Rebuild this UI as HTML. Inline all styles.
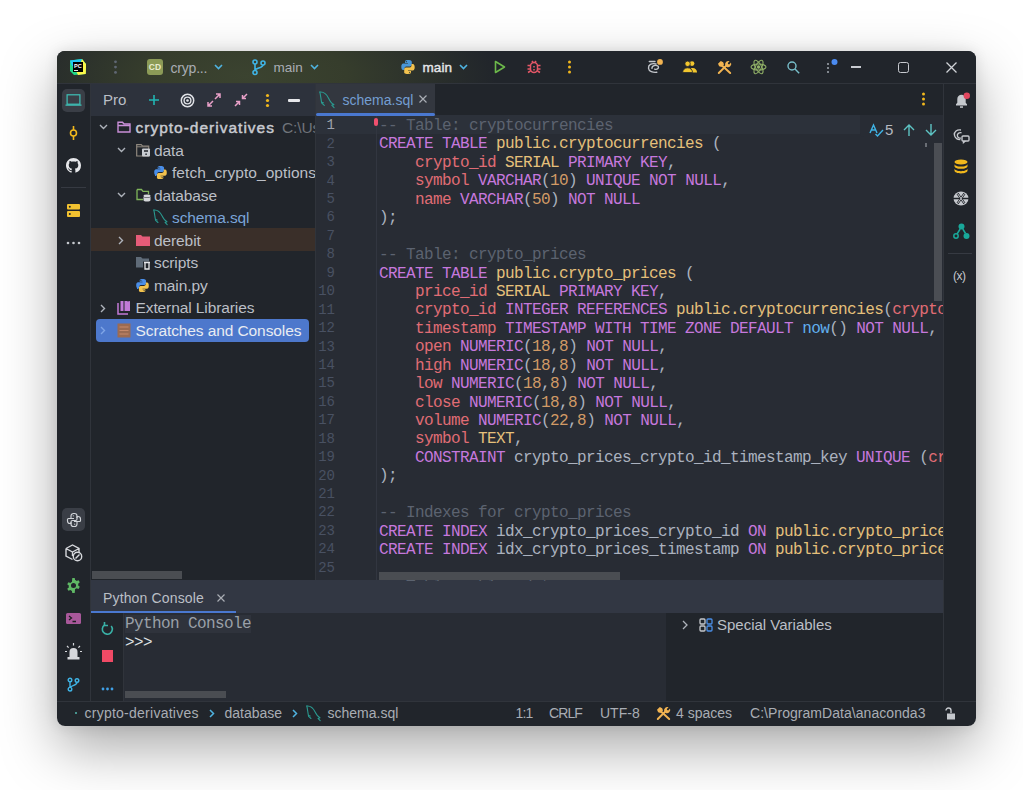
<!DOCTYPE html>
<html><head><meta charset="utf-8">
<style>
*{box-sizing:border-box;margin:0;padding:0}
html,body{width:1023px;height:790px;overflow:hidden;background:#fff}
body{font-family:"Liberation Sans",sans-serif;position:relative;color:#bbbfc6}
.a{position:absolute}
#win{left:57px;top:51px;width:919px;height:675px;border-radius:8px;overflow:hidden;box-shadow:0 22px 56px rgba(0,0,0,.34),0 0 14px rgba(0,0,0,.10)}
#pg{left:-57px;top:-51px;width:1023px;height:790px}
svg{position:absolute;overflow:visible}
.t{position:absolute;white-space:pre;font-size:15px;line-height:22.5px}
.code{position:absolute;left:379px;top:117px;width:564px;height:464px;overflow:hidden;font-family:"Liberation Mono",monospace;font-size:16px;letter-spacing:-0.6px;line-height:18.45px;color:#abb2bf;white-space:pre}
.code div{height:18.45px}
.k{color:#c678dd}.i{color:#e06c75}.y{color:#e5c07b}.n{color:#d19a66}.f{color:#61afef}.c{color:#5c6370}
.ln{position:absolute;left:301px;top:116.3px;width:34px;font-family:"Liberation Mono",monospace;font-size:14px;line-height:18.45px;color:#495162;text-align:right;white-space:pre}
.ln div{height:18.45px}
</style></head><body>
<div id="win" class="a"><div id="pg" class="a">
  <!-- backgrounds -->
  <div class="a" style="left:57px;top:51px;width:919px;height:675px;background:#21252b"></div>
  <div class="a" style="left:57px;top:51px;width:919px;height:32px;background:radial-gradient(ellipse 250px 90px at 190px 25px,#3b4330 0%,#363d2c 40%,rgba(33,37,43,0) 100%),#21252b"></div>
  <div class="a" style="left:57px;top:83px;width:919px;height:1px;background:#30343b"></div>
  <div class="a" style="left:90px;top:84px;width:1px;height:617px;background:#30343b"></div>
  <div class="a" style="left:943px;top:84px;width:1px;height:617px;background:#30343b"></div>
  <div class="a" style="left:57px;top:701px;width:919px;height:1px;background:#30343b"></div>
  <!-- project header -->
  <div class="a" style="left:91px;top:84px;width:224px;height:32px;background:#2d323c"></div>
  <div class="a" style="left:315px;top:84px;width:1px;height:496px;background:#30343b"></div>
  <!-- editor -->
  <div class="a" style="left:316px;top:84px;width:627px;height:31px;background:#21252b"></div>
  <div class="a" style="left:316px;top:115px;width:627px;height:465px;background:#282c34"></div>
  <div class="a" style="left:316px;top:115px;width:544px;height:19px;background:#2c313a"></div>
  <div class="a" style="left:376px;top:115px;width:1px;height:465px;background:#323640"></div>
  <!-- console -->
  <div class="a" style="left:91px;top:580px;width:852px;height:33px;background:#323743"></div>
  <div class="a" style="left:91px;top:613px;width:852px;height:88px;background:#282c34"></div>
  <div class="a" style="left:91px;top:613px;width:33px;height:88px;background:#21252b"></div>
  <div class="a" style="left:666px;top:613px;width:277px;height:88px;background:#21252b"></div>
  <!-- title bar -->
  <svg style="left:70px;top:59px" width="16" height="16" viewBox="0 0 16 16"><path d="M0 1.5L12 0 16 5 15.5 15 4 16 0 12z" fill="#21d789"/><path d="M0 1.5L12 0 10 6 2 7z" fill="#21c8f6"/><path d="M12 0L16 5 15.5 15 8 12z" fill="#fcf84a"/><path d="M16 5l-.5 10L8 16 6 12z" fill="#fcf84a"/><rect x="3" y="3" width="10" height="10" fill="#000"/><text x="4" y="8.6" font-family="Liberation Sans" font-weight="bold" font-size="5.6" fill="#fff">PC</text><rect x="4" y="11" width="4" height="0.9" fill="#fff"/></svg>
  <svg style="left:113px;top:60px" width="5" height="14" viewBox="0 0 5 14"><circle cx="2.5" cy="1.8" r="1.4" fill="#5f6773"/><circle cx="2.5" cy="7.1" r="1.4" fill="#5f6773"/><circle cx="2.5" cy="12.4" r="1.4" fill="#5f6773"/></svg>
  <div class="a" style="left:147px;top:59px;width:16px;height:16px;border-radius:3px;background:#8c9b57;color:#e8eccf;font:bold 8.5px 'Liberation Sans';line-height:16px;text-align:center">CD</div>
  <div class="t" style="left:170.5px;top:57px;font-size:14px;line-height:22px;color:#a9adb4;letter-spacing:-0.2px">cryp...</div>
  <svg style="left:214px;top:64px" width="9" height="6" viewBox="0 0 9 6" fill="none" stroke="#4fb3e0" stroke-width="1.6"><path d="M1 1l3.5 3.5L8 1"/></svg>
  <svg style="left:252px;top:59px" width="14" height="16" viewBox="0 0 14 16" fill="none" stroke="#3fb4e6" stroke-width="1.6"><circle cx="3" cy="3" r="2"/><circle cx="11" cy="4" r="2"/><circle cx="3" cy="13.5" r="2"/><path d="M3 5v6.5M11 6c0 3-8 3-8 5.5"/></svg>
  <div class="t" style="left:273.5px;top:57px;font-size:13.5px;line-height:22px;color:#a9adb4">main</div>
  <svg style="left:310px;top:64px" width="9" height="6" viewBox="0 0 9 6" fill="none" stroke="#4fb3e0" stroke-width="1.6"><path d="M1 1l3.5 3.5L8 1"/></svg>
  <svg style="left:400px;top:59px" width="16" height="16" viewBox="0 0 16 16"><path d="M7.9 1C4.8 1 5 2.4 5 2.4V4h3v.6H3.6S1.3 4.3 1.3 7.8s2 3.3 2 3.3h1.2V9.5s0-2 2-2h3.4s1.9 0 1.9-1.9V2.9S12 1 7.9 1zM6.3 2.1a.6.6 0 110 1.2.6.6 0 010-1.2z" fill="#4a97d8"/><path d="M8.1 15c3.1 0 2.9-1.4 2.9-1.4V12H8v-.6h4.4s2.3.3 2.3-3.2-2-3.3-2-3.3h-1.2v1.6s0 2-2 2H6.1s-1.9 0-1.9 1.9v3.1S4 15 8.1 15zm1.6-1.1a.6.6 0 110-1.2.6.6 0 010 1.2z" fill="#f2c24e"/></svg>
  <div class="t" style="left:422.5px;top:57px;font-size:13.5px;line-height:22px;color:#e4e6ea;-webkit-text-stroke:0.4px #e4e6ea;letter-spacing:0.1px">main</div>
  <svg style="left:459px;top:64px" width="9" height="6" viewBox="0 0 9 6" fill="none" stroke="#4fb3e0" stroke-width="1.6"><path d="M1 1l3.5 3.5L8 1"/></svg>
  <svg style="left:494px;top:60px" width="12" height="14" viewBox="0 0 12 14" fill="none" stroke="#6cb84a" stroke-width="1.6" stroke-linejoin="round"><path d="M1.5 1.5v11l9-5.5z"/></svg>
  <svg style="left:526px;top:59px" width="16" height="16" viewBox="0 0 16 16" fill="none" stroke="#e55767" stroke-width="1.5"><rect x="4.5" y="3.5" width="7" height="10" rx="3.5"/><path d="M8 7v1.5M8 10v1.5M6 2l1 1.5M10 2L9 3.5M1.5 6.5h3M11.5 6.5h3M1.5 10h3M11.5 10h3M2 13.5l2.5-1.5M14 13.5L11.5 12"/></svg>
  <svg style="left:567px;top:60px" width="5" height="14" viewBox="0 0 5 14"><circle cx="2.5" cy="2" r="1.5" fill="#f2b81c"/><circle cx="2.5" cy="7" r="1.5" fill="#f2b81c"/><circle cx="2.5" cy="12" r="1.5" fill="#f2b81c"/></svg>
  <svg style="left:647px;top:58px" width="17" height="16" viewBox="0 0 17 16" fill="none" stroke="#c2c5ca" stroke-width="1.4" stroke-linecap="round"><path d="M2.3 3.5H8"/><path d="M9 6C4.5 4.8 1.2 7 1.5 10.2S6 14.8 9.8 14.3"/><path d="M5 10.3c-.3-2.5 4-3.8 5.8-2.2s-.5 4-3.2 3"/><circle cx="13" cy="3.9" r="2.9" fill="#f2b452" stroke="none"/></svg>
  <svg style="left:682px;top:60px" width="16" height="13" viewBox="0 0 16 13" fill="#f2c62e"><circle cx="10" cy="3.6" r="2.4"/><path d="M9 8.2c.6-.2 1.2-.2 1.8-.2 2.4 0 4 1.6 4.3 4.6H10z"/><circle cx="5.6" cy="3.8" r="2.7" stroke="#21252b" stroke-width="0.8"/><path d="M.6 12.6C.8 9.6 2.8 7.8 5.6 7.8s4.8 1.8 5 4.8z" stroke="#21252b" stroke-width="0.8"/></svg>
  <svg style="left:717px;top:60px" width="15" height="14" viewBox="0 0 15 14"><path d="M5 5.5L13.2 13" stroke="#f2b452" stroke-width="2" stroke-linecap="round"/><path d="M1 3.8L3.8 1l2.4 1.2.8 2.2-2.6 2.6-2.2-.8z" fill="#f2b452"/><path d="M1.8 13L9.2 5.6" stroke="#f2b452" stroke-width="2" stroke-linecap="round"/><path d="M8.3 5.5a3.3 3.3 0 014.3-4.3L10.8 3l.3 1.1 1.1.3 1.8-1.8a3.3 3.3 0 01-4.3 4.3z" fill="#f2b452"/></svg>
  <svg style="left:750px;top:59px" width="17" height="16" viewBox="0 0 17 16" fill="none" stroke="#8fae66" stroke-width="1.1"><ellipse cx="8.5" cy="8" rx="7.5" ry="3" transform="rotate(60 8.5 8)"/><ellipse cx="8.5" cy="8" rx="7.5" ry="3" transform="rotate(-60 8.5 8)"/><ellipse cx="8.5" cy="8" rx="7.5" ry="3"/><circle cx="8.5" cy="8" r="1.2" fill="#93b56c"/></svg>
  <svg style="left:787px;top:61px" width="13" height="13" viewBox="0 0 13 13" fill="none" stroke="#78bfcb" stroke-width="1.4"><circle cx="5" cy="5" r="4"/><path d="M8 8l4.2 4.2"/></svg>
  <svg style="left:825px;top:59px" width="13" height="15" viewBox="0 0 13 15"><circle cx="3" cy="5" r="1.1" fill="#9aa0a8"/><circle cx="3" cy="9" r="1.1" fill="#9aa0a8"/><circle cx="3" cy="13" r="1.1" fill="#9aa0a8"/><circle cx="9.5" cy="3" r="3" fill="#4b8bf0"/></svg>
  <div class="a" style="left:851px;top:65.5px;width:10px;height:2px;background:#c8cbd0"></div>
  <div class="a" style="left:898px;top:62px;width:11px;height:11px;border:1.4px solid #c8cbd0;border-radius:2.5px"></div>
  <svg style="left:946px;top:62px" width="11" height="11" viewBox="0 0 11 11" fill="none" stroke="#d0d3d8" stroke-width="1.3"><path d="M.5 .5l10 10M10.5 .5l-10 10"/></svg>
  <!-- left stripe -->
  <div class="a" style="left:62px;top:89px;width:23px;height:23px;border-radius:5px;background:#3a3e46"></div>
  <svg style="left:65px;top:94px" width="17" height="12" viewBox="0 0 17 12" fill="none" stroke="#3fc1b7" stroke-width="1.2"><rect x="2.1" y="0.8" width="12.8" height="9.4"/><path d="M0.5 11.2h16"/></svg>
  <svg style="left:69px;top:126px" width="9" height="14" viewBox="0 0 9 14" fill="none" stroke="#f2b81c" stroke-width="1.6"><circle cx="4.5" cy="7" r="3"/><path d="M4.5 0v4M4.5 10v4"/></svg>
  <svg style="left:66px;top:158px" width="15" height="15" viewBox="0 0 16 16"><path fill="#e6e7ea" d="M8 0C3.58 0 0 3.58 0 8c0 3.54 2.29 6.53 5.47 7.59.4.07.55-.17.55-.38 0-.19-.01-.82-.01-1.49-2.01.37-2.53-.49-2.69-.94-.09-.23-.48-.94-.82-1.13-.28-.15-.68-.52-.01-.53.63-.01 1.08.58 1.23.82.72 1.21 1.87.87 2.33.66.07-.52.28-.87.51-1.07-1.78-.2-3.64-.89-3.64-3.95 0-.87.31-1.59.82-2.15-.08-.2-.36-1.02.08-2.12 0 0 .67-.21 2.2.82.64-.18 1.32-.27 2-.27.68 0 1.36.09 2 .27 1.53-1.04 2.2-.82 2.2-.82.44 1.1.16 1.92.08 2.12.51.56.82 1.27.82 2.15 0 3.07-1.87 3.75-3.65 3.95.29.25.54.73.54 1.48 0 1.07-.01 1.93-.01 2.2 0 .21.15.46.55.38A8.013 8.013 0 0016 8c0-4.42-3.58-8-8-8z"/></svg>
  <div class="a" style="left:61px;top:187px;width:25px;height:1px;background:#363a42"></div>
  <svg style="left:67px;top:204px" width="13" height="13" viewBox="0 0 13 13"><rect x="0" y="0" width="13" height="5.6" rx="1" fill="#f2c230"/><rect x="0" y="7" width="13" height="6" rx="1" fill="#f2c230"/><circle cx="2.8" cy="2.8" r="1" fill="#21252b"/><circle cx="2.8" cy="10" r="1" fill="#21252b"/></svg>
  <svg style="left:66px;top:241px" width="15" height="4" viewBox="0 0 15 4"><circle cx="2" cy="2" r="1.3" fill="#c5c8cd"/><circle cx="7.5" cy="2" r="1.3" fill="#c5c8cd"/><circle cx="13" cy="2" r="1.3" fill="#c5c8cd"/></svg>
  <div class="a" style="left:62px;top:508px;width:23px;height:23px;border-radius:5px;background:#3a3e46"></div>
  <svg style="left:65.5px;top:512px" width="16" height="16" viewBox="0 0 16 16" fill="none" stroke="#d0d3d8" stroke-width="1.15" stroke-linejoin="round"><path d="M5 6.5V4a2.5 2.5 0 012.5-2.5h1A2.5 2.5 0 0111 4v3a1.5 1.5 0 01-1.5 1.5h-3A1.5 1.5 0 005 10v1.5H4A2.5 2.5 0 011.5 9V7.5a1 1 0 011-1H8"/><path d="M11 9.5V12a2.5 2.5 0 01-2.5 2.5h-1A2.5 2.5 0 015 12V10M11 6V4.5h1A2.5 2.5 0 0114.5 7v1.5a1 1 0 01-1 1H8"/><circle cx="7.3" cy="3.8" r=".6" fill="#d0d3d8" stroke="none"/><circle cx="8.7" cy="12.2" r=".6" fill="#d0d3d8" stroke="none"/></svg>
  <svg style="left:65px;top:544px" width="18" height="18" viewBox="0 0 18 18" fill="none" stroke="#d6d8dc" stroke-width="1.4"><path d="M1 4.5L7.5 1 14 4.5v4M1 4.5v7.5L7.5 15.5M1 4.5L7.5 8l6.5-3.5M7.5 8v4"/><circle cx="12.5" cy="12.5" r="4.2"/><path d="M10.5 14.5l4-4"/></svg>
  <svg style="left:66px;top:578px" width="15" height="15" viewBox="0 0 16 16"><path fill="#5fb865" d="M9.3 0l.4 2.2c.6.2 1.1.5 1.6.9l2.1-.8 1.3 2.3-1.7 1.4c.1.6.1 1.2 0 1.9l1.7 1.4-1.3 2.3-2.1-.8c-.5.4-1 .7-1.6.9L9.3 16H6.7l-.4-2.2c-.6-.2-1.1-.5-1.6-.9l-2.1.8-1.3-2.3 1.7-1.4c-.1-.6-.1-1.2 0-1.9L1.3 6.7l1.3-2.3 2.1.8c.5-.4 1-.7 1.6-.9L6.7 0zM8 5.3a2.7 2.7 0 100 5.4 2.7 2.7 0 000-5.4z"/></svg>
  <div class="a" style="left:66px;top:612.5px;width:15px;height:11.5px;border-radius:1.5px;background:#a8589a"></div>
  <svg style="left:68px;top:614.5px" width="10" height="8" viewBox="0 0 10 8" fill="none" stroke="#1e1f22" stroke-width="1.3"><path d="M1 1l2.5 2L1 5M4.5 6.5H8"/></svg>
  <svg style="left:65px;top:643px" width="17" height="17" viewBox="0 0 17 17"><path d="M4.5 14V9a4 4 0 018 0v5z" fill="#d6d8dc"/><rect x="2.5" y="14" width="12" height="2.5" fill="#d6d8dc"/><path d="M8.5 0v2.5M2 3l1.6 1.6M15 3l-1.6 1.6M0 8.5h2M15 8.5h2" stroke="#d6d8dc" stroke-width="1.2"/></svg>
  <svg style="left:67px;top:677px" width="12" height="15" viewBox="0 0 12 15" fill="none" stroke="#3fb4e6" stroke-width="1.4"><circle cx="3" cy="3" r="1.8"/><circle cx="3" cy="12.2" r="1.8"/><circle cx="10" cy="3.5" r="1.8"/><path d="M3 4.8v5.6M10 5.3c0 3.5-6.5 3-6.8 5.3"/></svg>
  <div class="a" style="left:0;top:0;width:315px;height:580px;overflow:hidden">
  <!-- project header -->
  <div class="t" style="left:103px;top:89px;font-size:15px;line-height:22px;color:#bbbfc6">Pro<span style="font-size:5px;color:#6a8fc8">,</span></div>
  <svg style="left:148px;top:94px" width="12" height="12" viewBox="0 0 12 12"><path d="M6 1v10M1 6h10" stroke="#21b5b3" stroke-width="1.6"/></svg>
    <svg style="left:180px;top:93px" width="15" height="15" viewBox="0 0 15 15"><circle cx="7.5" cy="7.5" r="6.2" fill="none" stroke="#dfe1e5" stroke-width="1.5"/><circle cx="7.5" cy="7.5" r="3.4" fill="none" stroke="#dfe1e5" stroke-width="1.4"/><circle cx="7.5" cy="7.5" r="1.3" fill="#dfe1e5"/></svg>
  <svg style="left:207px;top:93px" width="14" height="14" viewBox="0 0 14 14" fill="none" stroke="#e8a0c8" stroke-width="1.5"><path d="M8 6l5-5M9 1h4v4M6 8l-5 5M1 9v4h4"/></svg>
  <svg style="left:234px;top:93px" width="14" height="14" viewBox="0 0 14 14" fill="none" stroke="#e8a0c8" stroke-width="1.5"><path d="M13 1L8.5 5.5M8.5 2v3.5H12M1 13l4.5-4.5M2 8.5h3.5V12"/></svg>
  <svg style="left:265px;top:93px" width="5" height="15" viewBox="0 0 5 15"><circle cx="2.5" cy="2.5" r="1.6" fill="#f2b81c"/><circle cx="2.5" cy="7.5" r="1.6" fill="#f2b81c"/><circle cx="2.5" cy="12.5" r="1.6" fill="#f2b81c"/></svg>
  <div class="a" style="left:288px;top:99px;width:12px;height:3px;background:#e6e7ea;border-radius:1px"></div>
  <!-- tree rows -->
  <div class="a" style="left:91px;top:228px;width:224px;height:23px;background:#3a2f29"></div>
  <div class="a" style="left:96px;top:319px;width:213px;height:23px;background:#4d78cc;border-radius:4px"></div>
  <svg style="left:99px;top:124px" width="9" height="6" viewBox="0 0 9 6" fill="none" stroke="#aeb3bb" stroke-width="1.4"><path d="M1 1l3.5 3.5L8 1"/></svg>
  <svg style="left:117px;top:121px" width="14" height="12" viewBox="0 0 14 12" fill="none" stroke="#c98fd8" stroke-width="1.4"><path d="M1 1.2h4.5l1.5 1.8h6v8H1z"/><path d="M1 4.5h12"/></svg>
  <div class="t" style="left:135.5px;top:117.2px;font-size:15.5px;letter-spacing:1.0px;-webkit-text-stroke:0.45px #c8cbd1;color:#c8cbd1">crypto-derivatives</div>
  <div class="t" style="left:282px;top:117.3px;color:#6f737a;font-size:15.5px;letter-spacing:-0.1px">C:\Users</div>
  <div class="a" style="left:91px;top:116px;width:0;height:0"></div>
  <svg style="left:117px;top:147px" width="9" height="6" viewBox="0 0 9 6" fill="none" stroke="#aeb3bb" stroke-width="1.4"><path d="M1 1l3.5 3.5L8 1"/></svg>
  <svg style="left:135.5px;top:144px" width="15" height="13" viewBox="0 0 15 13"><path d="M.7 .7h4.5l1.2 1.3h6.3v10H.7z" fill="none" stroke="#8f887e" stroke-width="1.2"/><path d="M.7 2.8h12" stroke="#8f887e" stroke-width="1"/><rect x="6" y="4.5" width="8" height="8" rx="1" fill="#c9ccd1"/><rect x="8" y="6" width="4" height="2" fill="#4a4d52"/><rect x="9.3" y="9.5" width="1.6" height="1.4" fill="#21252b"/></svg>
  <div class="t" style="left:154px;top:139.8px;color:#bbbfc6;font-size:15.5px;letter-spacing:-0.1px">data</div>
  <svg style="left:153px;top:165px" width="15" height="15" viewBox="0 0 16 16"><path d="M7.9 1C4.8 1 5 2.4 5 2.4V4h3v.6H3.6S1.3 4.3 1.3 7.8s2 3.3 2 3.3h1.2V9.5s0-2 2-2h3.4s1.9 0 1.9-1.9V2.9S12 1 7.9 1zM6.3 2.1a.6.6 0 110 1.2.6.6 0 010-1.2z" fill="#4a8ee8"/><path d="M8.1 15c3.1 0 2.9-1.4 2.9-1.4V12H8v-.6h4.4s2.3.3 2.3-3.2-2-3.3-2-3.3h-1.2v1.6s0 2-2 2H6.1s-1.9 0-1.9 1.9v3.1S4 15 8.1 15zm1.6-1.1a.6.6 0 110-1.2.6.6 0 010 1.2z" fill="#f2c24e"/></svg>
  <div class="t" style="left:172px;top:162.3px;color:#bbbfc6;font-size:15.5px;letter-spacing:0.05px">fetch_crypto_options.py</div>
  <svg style="left:117px;top:192px" width="9" height="6" viewBox="0 0 9 6" fill="none" stroke="#aeb3bb" stroke-width="1.4"><path d="M1 1l3.5 3.5L8 1"/></svg>
  <svg style="left:136px;top:188px" width="15" height="14" viewBox="0 0 15 14"><path d="M1 1.5h4.5l1.5 1.8h5.5v3M1 1.5v10h6" fill="none" stroke="#7fb55a" stroke-width="1.3"/><ellipse cx="11" cy="8" rx="3.5" ry="1.4" fill="#d5d7da"/><path d="M7.5 8.6v3.6c0 .8 1.6 1.4 3.5 1.4s3.5-.6 3.5-1.4V8.6c0 .8-1.6 1.4-3.5 1.4s-3.5-.6-3.5-1.4z" fill="#d5d7da"/></svg>
  <div class="t" style="left:154px;top:184.8px;color:#bbbfc6;font-size:15.5px;letter-spacing:-0.1px">database</div>
  <svg style="left:153px;top:209px" width="16" height="16" viewBox="0 0 16 16" fill="none" stroke="#2a9a90" stroke-width="1.05" stroke-linejoin="round" stroke-linecap="round"><path d="M0.8 1C4.5.6 7.2 3 9 6.8s2.8 5 5 6l-2 .6 2.2 2.3"/><path d="M0.8 1C1.6 4 1.8 8 2.6 11.3l2.4 2.2"/><path d="M2.6 10.5l1.5.6"/></svg>
  <div class="t" style="left:172px;top:207.3px;color:#7aa4d8;font-size:15.5px;letter-spacing:-0.1px">schema.sql</div>
  <svg style="left:118px;top:236px" width="6" height="9" viewBox="0 0 6 9" fill="none" stroke="#aeb3bb" stroke-width="1.4"><path d="M1 1l3.5 3.5L1 8"/></svg>
  <svg style="left:136px;top:234px" width="14" height="12" viewBox="0 0 14 12"><path d="M0 1h5l1.5 1.5H14V12H0z" fill="#e65c78"/></svg>
  <div class="t" style="left:154px;top:229.8px;color:#bbbfc6;font-size:15.5px;letter-spacing:-0.1px">derebit</div>
  <svg style="left:136px;top:256px" width="15" height="14" viewBox="0 0 15 14"><path d="M0 1h5l1.5 1.5H13v3H7v6H0z" fill="#5f6b78"/><path d="M8 6.5h6M9 6.5v6.5h4V7" fill="none" stroke="#e6e7ea" stroke-width="1.3"/></svg>
  <div class="t" style="left:154px;top:252.3px;color:#bbbfc6;font-size:15.5px;letter-spacing:-0.1px">scripts</div>
  <svg style="left:135px;top:278px" width="15" height="15" viewBox="0 0 16 16"><path d="M7.9 1C4.8 1 5 2.4 5 2.4V4h3v.6H3.6S1.3 4.3 1.3 7.8s2 3.3 2 3.3h1.2V9.5s0-2 2-2h3.4s1.9 0 1.9-1.9V2.9S12 1 7.9 1zM6.3 2.1a.6.6 0 110 1.2.6.6 0 010-1.2z" fill="#4a8ee8"/><path d="M8.1 15c3.1 0 2.9-1.4 2.9-1.4V12H8v-.6h4.4s2.3.3 2.3-3.2-2-3.3-2-3.3h-1.2v1.6s0 2-2 2H6.1s-1.9 0-1.9 1.9v3.1S4 15 8.1 15zm1.6-1.1a.6.6 0 110-1.2.6.6 0 010 1.2z" fill="#f2c24e"/></svg>
  <div class="t" style="left:154px;top:274.8px;color:#bbbfc6;font-size:15.5px;letter-spacing:-0.1px">main.py</div>
  <svg style="left:100px;top:304px" width="6" height="9" viewBox="0 0 6 9" fill="none" stroke="#aeb3bb" stroke-width="1.4"><path d="M1 1l3.5 3.5L1 8"/></svg>
  <svg style="left:117px;top:300px" width="14" height="15" viewBox="0 0 14 15"><path d="M1 3v11h10" fill="none" stroke="#c27ad8" stroke-width="1.5"/><path d="M3.5 1h3v10h-3zM7.5 1h2.5l.8.5L13 1v10H7.5z" fill="#c27ad8"/></svg>
  <div class="t" style="left:135.5px;top:297.3px;color:#bbbfc6;font-size:15.5px;letter-spacing:-0.1px">External Libraries</div>
  <svg style="left:100px;top:326px" width="6" height="9" viewBox="0 0 6 9" fill="none" stroke="#7fa5e6" stroke-width="1.4"><path d="M1 1l3.5 3.5L1 8"/></svg>
  <svg style="left:117px;top:323px" width="14" height="15" viewBox="0 0 14 15"><rect x="0.5" y="0.5" width="13" height="14" fill="#9c6b52"/><path d="M2.5 4h9M2.5 7.5h9M2.5 11h9" stroke="#c88a6a" stroke-width="1.2"/></svg>
  <div class="t" style="left:135.5px;top:319.8px;color:#e8ecf2;font-size:15.5px;letter-spacing:-0.1px">Scratches and Consoles</div>
  </div>
  <!-- code -->
  <div class="ln"><div style="color:#9ea4ad">1</div><div>2</div><div>3</div><div>4</div><div>5</div><div>6</div><div>7</div><div>8</div><div>9</div><div>10</div><div>11</div><div>12</div><div>13</div><div>14</div><div>15</div><div>16</div><div>17</div><div>18</div><div>19</div><div>20</div><div>21</div><div>22</div><div>23</div><div>24</div><div>25</div></div>
  <div class="a" style="left:373.5px;top:117.5px;width:4px;height:8px;border-radius:2px;background:#f0506e"></div>
  <div class="code"><div class="c">-- Table: cryptocurrencies</div><div><span class="k">CREATE TABLE</span> <span class="y">public.cryptocurrencies</span> (</div><div>    <span class="i">crypto_id</span> <span class="y">SERIAL</span> <span class="k">PRIMARY KEY</span>,</div><div>    <span class="i">symbol</span> <span class="k">VARCHAR</span>(<span class="n">10</span>) <span class="k">UNIQUE NOT NULL</span>,</div><div>    <span class="i">name</span> <span class="k">VARCHAR</span>(<span class="n">50</span>) <span class="k">NOT NULL</span></div><div>);</div><div> </div><div class="c">-- Table: crypto_prices</div><div><span class="k">CREATE TABLE</span> <span class="y">public.crypto_prices</span> (</div><div>    <span class="i">price_id</span> <span class="y">SERIAL</span> <span class="k">PRIMARY KEY</span>,</div><div>    <span class="i">crypto_id</span> <span class="k">INTEGER REFERENCES</span> <span class="y">public.cryptocurrencies</span>(<span class="i">crypto_id</span>),</div><div>    <span class="i">timestamp</span> <span class="k">TIMESTAMP WITH TIME ZONE DEFAULT</span> <span class="f">now</span>() <span class="k">NOT NULL</span>,</div><div>    <span class="i">open</span> <span class="k">NUMERIC</span>(<span class="n">18</span>,<span class="n">8</span>) <span class="k">NOT NULL</span>,</div><div>    <span class="i">high</span> <span class="k">NUMERIC</span>(<span class="n">18</span>,<span class="n">8</span>) <span class="k">NOT NULL</span>,</div><div>    <span class="i">low</span> <span class="k">NUMERIC</span>(<span class="n">18</span>,<span class="n">8</span>) <span class="k">NOT NULL</span>,</div><div>    <span class="i">close</span> <span class="k">NUMERIC</span>(<span class="n">18</span>,<span class="n">8</span>) <span class="k">NOT NULL</span>,</div><div>    <span class="i">volume</span> <span class="k">NUMERIC</span>(<span class="n">22</span>,<span class="n">8</span>) <span class="k">NOT NULL</span>,</div><div>    <span class="i">symbol</span> <span class="y">TEXT</span>,</div><div>    <span class="k">CONSTRAINT</span> crypto_prices_crypto_id_timestamp_key <span class="k">UNIQUE</span> (<span class="i">crypto_id</span>, <span class="i">timestamp</span>)</div><div>);</div><div> </div><div class="c">-- Indexes for crypto_prices</div><div><span class="k">CREATE INDEX</span> idx_crypto_prices_crypto_id <span class="k">ON</span> <span class="y">public.crypto_prices</span>(<span class="i">crypto_id</span>);</div><div><span class="k">CREATE INDEX</span> idx_crypto_prices_timestamp <span class="k">ON</span> <span class="y">public.crypto_prices</span>(<span class="i">timestamp</span>);</div><div> </div><div class="c">-- Table: ohlcv_data</div>
</div>
  <!-- editor tab -->
  <div class="a" style="left:316px;top:84px;width:119px;height:31px;background:#33373f"></div>
  <div class="a" style="left:316px;top:113px;width:119px;height:3px;border-radius:2px;background:#4a78d0"></div>
  <svg style="left:319px;top:91px" width="17" height="17" viewBox="0 0 16 16" fill="none" stroke="#2a9a90" stroke-width="1.05" stroke-linejoin="round" stroke-linecap="round"><path d="M0.8 1C4.5.6 7.2 3 9 6.8s2.8 5 5 6l-2 .6 2.2 2.3"/><path d="M0.8 1C1.6 4 1.8 8 2.6 11.3l2.4 2.2"/><path d="M2.6 10.5l1.5.6"/></svg>
  <div class="t" style="left:342.5px;top:89px;font-size:14px;line-height:22px;color:#739ed2">schema.sql</div>
  <svg style="left:419px;top:95px" width="8" height="8" viewBox="0 0 8 8" fill="none" stroke="#a9adb4" stroke-width="1.2"><path d="M.5 .5l7 7M7.5 .5l-7 7"/></svg>
  <svg style="left:921px;top:92px" width="5" height="14" viewBox="0 0 5 14"><circle cx="2.5" cy="2" r="1.5" fill="#f2b81c"/><circle cx="2.5" cy="7" r="1.5" fill="#f2b81c"/><circle cx="2.5" cy="12" r="1.5" fill="#f2b81c"/></svg>
  <!-- inspection widget -->
  <div class="a" style="left:860px;top:115px;width:80px;height:22px;border-radius:0 0 0 4px;background:#282c34"></div>
  <svg style="left:869px;top:123.5px" width="15" height="13" viewBox="0 0 15 13" fill="none" stroke="#3fb4e6" stroke-width="1.4"><path d="M1 9L4.5 1 8 9M2.3 6h4.4M6.5 10l2 2L14 6"/></svg>
  <div class="t" style="left:885px;top:119.5px;font-size:15px;line-height:20px;color:#b5b9c0">5</div>
  <svg style="left:903px;top:124px" width="12" height="12" viewBox="0 0 12 12" fill="none" stroke="#5ec4c4" stroke-width="1.4"><path d="M6 12V1M1 6l5-5 5 5"/></svg>
  <svg style="left:925px;top:124px" width="12" height="12" viewBox="0 0 12 12" fill="none" stroke="#5ec4c4" stroke-width="1.4"><path d="M6 0v11M1 6l5 5 5-5"/></svg>
  <!-- scrollbars -->
  <div class="a" style="left:934px;top:143px;width:8px;height:158px;background:#4b4e54"></div>
  <div class="a" style="left:925px;top:143px;width:2px;height:4px;background:#6a6e75"></div>
  <div class="a" style="left:379px;top:572px;width:241px;height:8px;background:#4a4d52"></div>
  <div class="a" style="left:92px;top:571px;width:90px;height:8px;background:#4a4d52"></div>
  <!-- right stripe -->
  <svg style="left:954px;top:92px" width="17" height="17" viewBox="0 0 17 17"><path d="M2 13.5h11v-1.2l-1.3-1.5V7A4.2 4.2 0 007.5 2.8 4.2 4.2 0 003.3 7v3.8L2 12.3z" fill="#c5c8cd"/><rect x="6" y="14.3" width="3" height="1.5" fill="#c5c8cd"/><circle cx="12.8" cy="3.8" r="3.2" fill="#e2475f"/></svg>
  <svg style="left:953px;top:128px" width="17" height="15" viewBox="0 0 17 15" fill="none" stroke="#c5c8cd" stroke-width="1.4"><path d="M8 2C4 1.2 1 3.8 1.4 7s3.5 5 6 4.6"/><path d="M8.5 4.8C6 4.2 4 5.8 4.4 7.8s2.2 2.5 3.5 2.2"/><rect x="9" y="8" width="7" height="5" rx="1"/><path d="M10.5 13v1.5l2-1.5"/></svg>
  <svg style="left:954px;top:159px" width="14" height="15" viewBox="0 0 14 15" fill="#f2b81c"><ellipse cx="7" cy="3" rx="6.5" ry="2.6"/><path d="M.5 5v2.2C.5 8.6 3.4 9.8 7 9.8s6.5-1.2 6.5-2.6V5C13.5 6.4 10.6 7.6 7 7.6S.5 6.4.5 5zM.5 9.6v2.2c0 1.4 2.9 2.6 6.5 2.6s6.5-1.2 6.5-2.6V9.6c0 1.4-2.9 2.6-6.5 2.6S.5 11 .5 9.6z"/></svg>
  <svg style="left:953px;top:191px" width="16" height="15" viewBox="0 0 16 15"><ellipse cx="8" cy="7.5" rx="7.5" ry="7" fill="#c5c8cd"/><path d="M0 7.5h16" stroke="#21252b" stroke-width="1.4"/><path d="M4.5 2.5l7 10M11.5 2.5l-7 10" stroke="#21252b" stroke-width="2.2"/><path d="M4.5 2.5l7 10M11.5 2.5l-7 10" stroke="#c5c8cd" stroke-width="1"/></svg>
  <svg style="left:953px;top:223px" width="17" height="17" viewBox="0 0 17 17"><circle cx="8.5" cy="3.5" r="3" fill="#19a89a"/><circle cx="13.5" cy="13" r="3" fill="#19a89a"/><circle cx="3" cy="13" r="2.2" fill="none" stroke="#19a89a" stroke-width="1.5"/><path d="M7.2 6L4 11M9.8 6l2.8 4.5" stroke="#19a89a" stroke-width="1.5"/></svg>
  <div class="a" style="left:948px;top:253px;width:24px;height:1px;background:#363a42"></div>
  <div class="t" style="left:953px;top:266px;font-size:12px;line-height:20px;color:#c5c8cd;letter-spacing:-0.5px">(x)</div>
  <!-- console -->
  <div class="t" style="left:103px;top:587px;font-size:14px;line-height:22px;color:#bbbfc6;letter-spacing:0.15px">Python Console</div>
  <svg style="left:217px;top:594px" width="8" height="8" viewBox="0 0 8 8" fill="none" stroke="#a9adb4" stroke-width="1.2"><path d="M.5 .5l7 7M7.5 .5l-7 7"/></svg>
  <div class="a" style="left:91px;top:611px;width:145px;height:2px;background:#4a78d0"></div>
  <div class="a" style="left:123px;top:613px;width:1px;height:88px;background:#30343b"></div>
  <svg style="left:101px;top:621px" width="13" height="14" viewBox="0 0 13 14" fill="none" stroke="#39b0a6" stroke-width="1.6"><path d="M3.3 4.2A5 5 0 1010.2 5"/><path d="M3.5 1v3.5H7" /></svg>
  <div class="a" style="left:101.5px;top:650px;width:11.5px;height:11.5px;background:#f04a65"></div>
  <svg style="left:101px;top:687px" width="13" height="4" viewBox="0 0 13 4"><circle cx="2" cy="2" r="1.4" fill="#3fa0e6"/><circle cx="6.5" cy="2" r="1.4" fill="#3fa0e6"/><circle cx="11" cy="2" r="1.4" fill="#3fa0e6"/></svg>
  <div class="a" style="left:125px;top:614.5px;width:126px;height:18px;background:#2f333c"></div>
  <div class="t" style="left:125px;top:615px;font-family:'Liberation Mono',monospace;font-size:16px;letter-spacing:-0.6px;line-height:18.45px;color:#9aa0a8">Python Console</div>
  <div class="t" style="left:125px;top:633.5px;font-family:'Liberation Mono',monospace;font-size:16px;letter-spacing:-0.6px;line-height:18.45px;color:#dfe1e5">&gt;&gt;&gt;</div>
  <div class="a" style="left:125px;top:691px;width:101px;height:7px;background:#4a4d52"></div>
  <svg style="left:682px;top:620px" width="6" height="10" viewBox="0 0 6 10" fill="none" stroke="#aeb3bb" stroke-width="1.3"><path d="M1 1l4 4-4 4"/></svg>
  <svg style="left:699px;top:618px" width="14" height="14" viewBox="0 0 14 14" fill="none" stroke-width="1.3"><rect x="1" y="1" width="5" height="5" rx="1" stroke="#c5c8cd"/><rect x="8" y="1" width="5" height="5" rx="1" stroke="#4a8ee8"/><rect x="1" y="8" width="5" height="5" rx="1" stroke="#c5c8cd"/><rect x="8" y="8" width="5" height="5" rx="1" stroke="#4a8ee8"/></svg>
  <div class="t" style="left:717px;top:614px;font-size:15px;line-height:22px;color:#bbbfc6">Special Variables</div>
  <!-- status bar -->
  <div class="a" style="left:75px;top:712px;width:2px;height:2px;border-radius:1px;background:#53b9b0"></div>
  <div class="t" style="left:84.5px;top:703px;font-size:14px;line-height:21px;color:#a9adb4;letter-spacing:0.25px">crypto-derivatives</div>
  <svg style="left:209px;top:709px" width="6" height="9" viewBox="0 0 6 9" fill="none" stroke="#4fb3e0" stroke-width="1.5"><path d="M1 1l3.5 3.5L1 8"/></svg>
  <div class="t" style="left:224.5px;top:703px;font-size:14px;line-height:21px;color:#a9adb4">database</div>
  <svg style="left:292px;top:709px" width="6" height="9" viewBox="0 0 6 9" fill="none" stroke="#4fb3e0" stroke-width="1.5"><path d="M1 1l3.5 3.5L1 8"/></svg>
  <svg style="left:306px;top:705px" width="16" height="16" viewBox="0 0 16 16" fill="none" stroke="#2a9a90" stroke-width="1.05" stroke-linejoin="round" stroke-linecap="round"><path d="M0.8 1C4.5.6 7.2 3 9 6.8s2.8 5 5 6l-2 .6 2.2 2.3"/><path d="M0.8 1C1.6 4 1.8 8 2.6 11.3l2.4 2.2"/><path d="M2.6 10.5l1.5.6"/></svg>
  <div class="t" style="left:327.5px;top:703px;font-size:14px;line-height:21px;color:#a9adb4">schema.sql</div>
  <div class="t" style="left:515.5px;top:703px;font-size:14px;line-height:21px;color:#a9adb4;letter-spacing:-0.8px">1:1</div>
  <div class="t" style="left:549px;top:703px;font-size:14px;line-height:21px;color:#a9adb4;letter-spacing:-0.9px">CRLF</div>
  <div class="t" style="left:600px;top:703px;font-size:14px;line-height:21px;color:#a9adb4">UTF-8</div>
  <svg style="left:656px;top:706px" width="15" height="14" viewBox="0 0 15 14"><path d="M5 5.5L13.2 13" stroke="#f2b452" stroke-width="2" stroke-linecap="round"/><path d="M1 3.8L3.8 1l2.4 1.2.8 2.2-2.6 2.6-2.2-.8z" fill="#f2b452"/><path d="M1.8 13L9.2 5.6" stroke="#f2b452" stroke-width="2" stroke-linecap="round"/><path d="M8.3 5.5a3.3 3.3 0 014.3-4.3L10.8 3l.3 1.1 1.1.3 1.8-1.8a3.3 3.3 0 01-4.3 4.3z" fill="#f2b452"/></svg>
  <div class="t" style="left:676px;top:703px;font-size:14px;line-height:21px;color:#a9adb4">4 spaces</div>
  <div class="t" style="left:750px;top:703px;font-size:14px;line-height:21px;color:#a9adb4;letter-spacing:0.05px">C:\ProgramData\anaconda3</div>
  <svg style="left:943.5px;top:708px" width="12" height="12" viewBox="0 0 12 12"><path d="M2 2.5a2.5 2.5 0 015 0V5" fill="none" stroke="#c5c8cd" stroke-width="1.4"/><rect x="3" y="5.5" width="8" height="6" fill="#c5c8cd"/></svg>
</div></div>
</body></html>
